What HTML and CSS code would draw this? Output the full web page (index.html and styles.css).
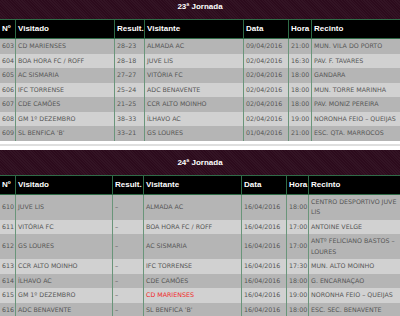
FILE: index.html
```html
<!DOCTYPE html>
<html lang="pt">
<head>
<meta charset="utf-8">
<title>Jornadas</title>
<link rel="stylesheet" href="styles.css">
</head>
<body>
<div class="page">
  <section class="jornada">
    <div class="title">23ª Jornada</div>
    <table class="games t23">
      <colgroup>
        <col class="c-n"><col class="c-home"><col class="c-res"><col class="c-away"><col class="c-date"><col class="c-time"><col class="c-venue">
      </colgroup>
      <thead>
        <tr><th>Nº</th><th>Visitado</th><th>Result.</th><th>Visitante</th><th>Data</th><th>Hora</th><th>Recinto</th></tr>
      </thead>
      <tbody>
        <tr><td>603</td><td>CD MARIENSES</td><td>28–23</td><td>ALMADA AC</td><td>09/04/2016</td><td>21:00</td><td>MUN. VILA DO PORTO</td></tr>
        <tr><td>604</td><td>BOA HORA FC / ROFF</td><td>28–18</td><td>JUVE LIS</td><td>02/04/2016</td><td>16:30</td><td>PAV. F. TAVARES</td></tr>
        <tr><td>605</td><td>AC SISMARIA</td><td>27–27</td><td>VITÓRIA FC</td><td>02/04/2016</td><td>18:00</td><td>GANDARA</td></tr>
        <tr><td>606</td><td>IFC TORRENSE</td><td>25–24</td><td>ADC BENAVENTE</td><td>02/04/2016</td><td>18:00</td><td>MUN. TORRE MARINHA</td></tr>
        <tr><td>607</td><td>CDE CAMÕES</td><td>21–25</td><td>CCR ALTO MOINHO</td><td>02/04/2016</td><td>18:00</td><td>PAV. MONIZ PEREIRA</td></tr>
        <tr><td>608</td><td>GM 1º DEZEMBRO</td><td>38–33</td><td>ÍLHAVO AC</td><td>02/04/2016</td><td>19:00</td><td>NORONHA FEIO – QUEIJAS</td></tr>
        <tr><td>609</td><td>SL BENFICA 'B'</td><td>33–21</td><td>GS LOURES</td><td>01/04/2016</td><td>21:00</td><td>ESC. QTA. MARROCOS</td></tr>
      </tbody>
    </table>
  </section>
  <div class="sep"></div>
  <section class="jornada">
    <div class="title">24ª Jornada</div>
    <table class="games t24">
      <colgroup>
        <col class="c-n"><col class="c-home"><col class="c-res"><col class="c-away"><col class="c-date"><col class="c-time"><col class="c-venue">
      </colgroup>
      <thead>
        <tr><th>Nº</th><th>Visitado</th><th>Result.</th><th>Visitante</th><th>Data</th><th>Hora</th><th>Recinto</th></tr>
      </thead>
      <tbody>
        <tr><td>610</td><td>JUVE LIS</td><td>–</td><td>ALMADA AC</td><td>16/04/2016</td><td>18:00</td><td>CENTRO DESPORTIVO JUVE<br>LIS</td></tr>
        <tr><td>611</td><td>VITÓRIA FC</td><td>–</td><td>BOA HORA FC / ROFF</td><td>16/04/2016</td><td>17:00</td><td>ANTOINE VELGE</td></tr>
        <tr><td>612</td><td>GS LOURES</td><td>–</td><td>AC SISMARIA</td><td>16/04/2016</td><td>17:00</td><td>ANTº FELICIANO BASTOS –<br>LOURES</td></tr>
        <tr><td>613</td><td>CCR ALTO MOINHO</td><td>–</td><td>IFC TORRENSE</td><td>16/04/2016</td><td>17:30</td><td>MUN. ALTO MOINHO</td></tr>
        <tr><td>614</td><td>ÍLHAVO AC</td><td>–</td><td>CDE CAMÕES</td><td>16/04/2016</td><td>18:00</td><td>G. ENCARNAÇAO</td></tr>
        <tr><td>615</td><td>GM 1º DEZEMBRO</td><td>–</td><td class="hl">CD MARIENSES</td><td>16/04/2016</td><td>19:00</td><td>NORONHA FEIO – QUEIJAS</td></tr>
        <tr><td>616</td><td>ADC BENAVENTE</td><td>–</td><td>SL BENFICA 'B'</td><td>16/04/2016</td><td>18:00</td><td>ESC. SEC. BENAVENTE</td></tr>
      </tbody>
    </table>
  </section>
</div>
</body>
</html>
```

FILE: styles.css
```css
html, body {
  margin: 0;
  padding: 0;
  background: #ffffff;
  overflow: hidden;
}

.page {
  width: 400px;
  margin-top: -6px;
}

.title {
  height: 25px;
  border-bottom: 1px solid #2f6b47;
  background-color: #2c0b1c;
  background-image: repeating-linear-gradient(45deg, rgba(255, 255, 255, 0.035) 0 1px, transparent 1px 2px);
  color: #ffffff;
  font: bold 8px "Liberation Sans", Arial, sans-serif;
  line-height: 25px;
  text-align: center;
}

.sep {
  height: 3px;
  border-bottom: 2px solid #dedede;
  margin-bottom: 4px;
}

.games {
  width: 400px;
  table-layout: fixed;
  border-collapse: separate;
  border-spacing: 0;
}

.games th {
  background: #000000;
  color: #ffffff;
  font: bold 8px/18px "Liberation Sans", Arial, sans-serif;
  text-align: left;
  padding: 0 2px;
  border-bottom: 1px solid #2f6b47;
  border-right: 1px solid #2f6b47;
  white-space: nowrap;
  overflow: hidden;
}

.games td {
  font: 6.3px/10.5px "DejaVu Sans", Verdana, sans-serif;
  color: #555555;
  padding: 2px 2px;
  border-right: 1px solid #6a957a;
  white-space: nowrap;
  overflow: hidden;
  vertical-align: middle;
}

.games tr > :last-child {
  border-right: 0;
}

.games tbody tr:nth-child(odd) td {
  background: #b5b5b5;
}

.games tbody tr:nth-child(even) td {
  background: #d1d1d1;
}

.games td.hl {
  color: #f02828;
}

.t23 .c-n { width: 16px; }
.t23 .c-home { width: 99px; }
.t23 .c-res { width: 30px; }
.t23 .c-away { width: 99px; }
.t23 .c-date { width: 45px; }
.t23 .c-time { width: 23px; }
.t23 .c-venue { width: 88px; }

.t24 .c-n { width: 16px; }
.t24 .c-home { width: 97px; }
.t24 .c-res { width: 31px; }
.t24 .c-away { width: 98px; }
.t24 .c-date { width: 45px; }
.t24 .c-time { width: 22px; }
.t24 .c-venue { width: 91px; }
```
